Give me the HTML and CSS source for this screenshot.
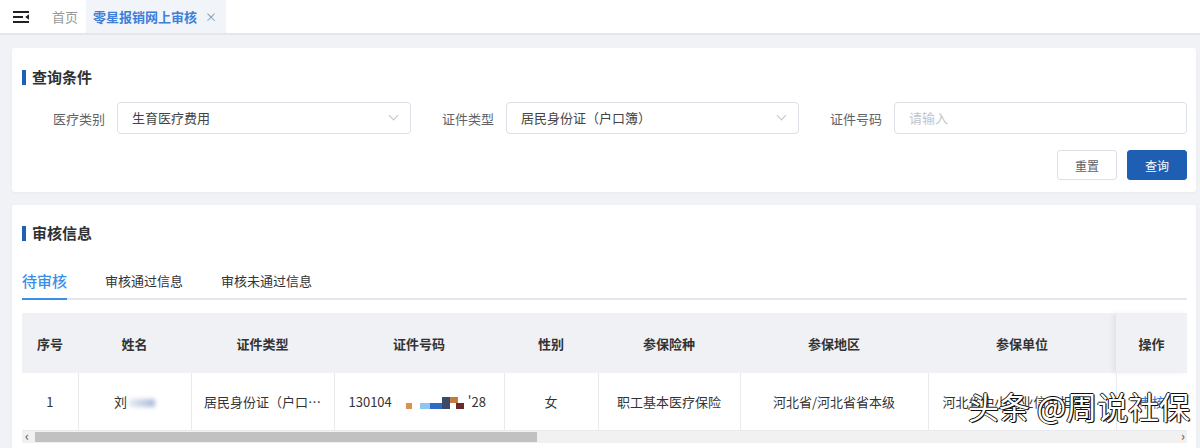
FILE: index.html
```html
<!DOCTYPE html>
<html lang="zh-CN">
<head>
    <meta charset="UTF-8">
    <title>零星报销网上审核</title>
    <link rel="stylesheet" href="styles.css">
</head>
<body>

<!-- 顶部标签栏 -->
<div class="topbar">
    <div class="fold-icon">
        <svg width="16" height="12" viewBox="0 0 16 12">
            <rect x="0" y="0" width="16" height="2" fill="#222"/>
            <rect x="0" y="5" width="10" height="2" fill="#222"/>
            <path d="M16 3.2 L12.2 6 L16 8.8 Z" fill="#222"/>
            <rect x="0" y="10" width="16" height="2" fill="#222"/>
        </svg>
    </div>
    <div class="nav-tab">首页</div>
    <div class="nav-tab active">零星报销网上审核<span class="close">×</span></div>
</div>

<div class="main">
    <!-- 查询条件 -->
    <div class="card query-card">
        <div class="card-title">查询条件</div>
        <div class="form-row">
            <div class="form-item">
                <label>医疗类别</label>
                <div class="control select">生育医疗费用<span class="arrow"></span></div>
            </div>
            <div class="form-item">
                <label>证件类型</label>
                <div class="control select">居民身份证（户口簿）<span class="arrow"></span></div>
            </div>
            <div class="form-item">
                <label>证件号码</label>
                <div class="control placeholder">请输入</div>
            </div>
        </div>
        <div class="form-actions">
            <button class="btn">重置</button>
            <button class="btn primary">查询</button>
        </div>
    </div>

    <!-- 审核信息 -->
    <div class="card audit-card">
        <div class="card-title">审核信息</div>
        <div class="tabs">
            <div class="tab active">待审核</div>
            <div class="tab">审核通过信息</div>
            <div class="tab">审核未通过信息</div>
        </div>

        <div class="table-wrap">
            <table class="data-table">
                <colgroup>
                    <col style="width:56px"><col style="width:113px"><col style="width:143px">
                    <col style="width:170px"><col style="width:94px"><col style="width:142px">
                    <col style="width:188px"><col style="width:188px"><col style="width:71px">
                </colgroup>
                <thead>
                    <tr>
                        <th>序号</th><th>姓名</th><th>证件类型</th><th>证件号码</th><th>性别</th>
                        <th>参保险种</th><th>参保地区</th><th>参保单位</th><th class="fixed">操作</th>
                    </tr>
                </thead>
                <tbody>
                    <tr>
                        <td>1</td>
                        <td>刘<span class="blur-name"></span></td>
                        <td class="ellipsis">居民身份证（户口…</td>
                        <td class="left">130104<span class="mosaic"><i class="m1"></i><i class="m2"></i><i class="m3"></i><i class="m4"></i><i class="m5"></i><i class="m6"></i></span>'28</td>
                        <td>女</td>
                        <td>职工基本医疗保险</td>
                        <td>河北省/河北省省本级</td>
                        <td class="left">河北省中小企业信用担保</td>
                        <td class="fixed"><a class="link" href="#">审核</a></td>
                    </tr>
                </tbody>
            </table>
            <div class="hscroll">
                <span class="sarrow">‹</span>
                <div class="thumb"></div>
                <span class="sarrow right">›</span>
            </div>
            <div class="watermark">头条 @周说社保</div>
        </div>
    </div>
</div>

</body>
</html>
```

FILE: styles.css
```css
/* 全体 */
body {
    margin: 0;
    font-family: "Noto Sans CJK SC", "Liberation Sans", sans-serif;
    font-size: 13px;
    color: #333;
    background: #f0f2f5;
    overflow: hidden;
}

/* 顶部标签栏 */
.topbar {
    height: 33px;
    background: #fff;
    border-bottom: 2px solid #e4e7ea;
    display: flex;
    align-items: stretch;
}

.fold-icon {
    width: 40px;
    padding-left: 13px;
    display: flex;
    align-items: center;
    box-sizing: border-box;
}

.nav-tab {
    display: flex;
    align-items: center;
    padding: 0 7px 0 12px;
    color: #999;
    font-size: 13px;
}

.nav-tab.active {
    margin-left: 1px;
    background: #f1f4f9;
    color: #3d7fd9;
    font-weight: bold;
    padding: 0 9px 0 7px;
}

.nav-tab .close {
    margin-left: 8px;
    font-weight: normal;
    color: #8c96a8;
    font-size: 12px;
}

/* メイン */
.main {
    padding: 13px 4px 0 12px;
}

.card {
    background: #fff;
    border-radius: 3px;
    padding: 19px 9px 12px 10px;
    box-shadow: 0 1px 3px rgba(0, 0, 0, 0.04);
}

.audit-card {
    margin-top: 13px;
    padding-top: 18px;
    padding-bottom: 0;
    height: 240px;
}

.card-title {
    font-size: 15px;
    font-weight: bold;
    color: #303133;
    line-height: 20px;
    display: flex;
    align-items: center;
}

.card-title::before {
    content: "";
    width: 4px;
    height: 15px;
    background: #1f5fb4;
    margin-right: 6px;
}

/* 查询フォーム */
.form-row {
    margin-top: 15px;
    display: grid;
    grid-template-columns: 389px 388px 388px;
}

.form-item {
    display: flex;
    align-items: center;
}

.form-item label {
    width: 95px;
    padding-right: 12px;
    box-sizing: border-box;
    text-align: right;
    color: #606266;
}

.control {
    flex: 1;
    height: 32px;
    border: 1px solid #dcdfe6;
    border-radius: 4px;
    box-sizing: border-box;
    padding-left: 14px;
    line-height: 30px;
    color: #444;
    position: relative;
}

.control.placeholder {
    color: #c0c4cc;
}

.arrow {
    position: absolute;
    right: 13px;
    top: 9px;
    width: 6px;
    height: 6px;
    border-right: 1px solid #c0c4cc;
    border-bottom: 1px solid #c0c4cc;
    transform: rotate(45deg);
}

.form-actions {
    margin-top: 16px;
    display: flex;
    justify-content: flex-end;
    gap: 10px;
}

.btn {
    width: 60px;
    height: 30px;
    border: 1px solid #dcdfe6;
    border-radius: 3px;
    background: #fff;
    color: #606266;
    font-family: inherit;
    font-size: 12px;
    cursor: pointer;
}

.btn.primary {
    background: #1e5fb4;
    border-color: #1e5fb4;
    color: #fff;
}

/* タブ */
.tabs {
    margin-top: 17px;
    display: flex;
    gap: 38px;
    border-bottom: 2px solid #e4e7ed;
}

.tab {
    padding-top: 4px;
    height: 34px;
    line-height: 34px;
    margin-bottom: -2px;
    border-bottom: 2px solid transparent;
    color: #333;
}

.tab.active {
    font-size: 15px;
    font-weight: 500;
    color: #3b8ee6;
    border-bottom-color: #3b8ee6;
}

/* テーブル */
.table-wrap {
    margin-top: 13px;
    position: relative;
}

.data-table {
    table-layout: fixed;
    border-collapse: collapse;
    width: 1165px;
}

.data-table th {
    height: 60px;
    background: #eff1f5;
    font-weight: bold;
    color: #333;
    text-align: center;
    padding: 0;
}

.data-table td {
    height: 57px;
    text-align: center;
    border-left: 1px solid #e8eaee;
    border-bottom: 1px solid #e8eaee;
    padding: 0 10px;
    color: #333;
    white-space: nowrap;
    overflow: hidden;
}

.data-table td:first-child {
    border-left: none;
}

.data-table td.left {
    text-align: left;
    padding-left: 14px;
}

.data-table td.ellipsis {
    padding-left: 10px;
}

.data-table .fixed {
    box-shadow: -3px 0 5px rgba(0, 0, 0, 0.06);
}

.blur-name {
    display: inline-block;
    width: 26px;
    height: 8px;
    margin-left: 2px;
    vertical-align: middle;
    background: linear-gradient(90deg, #e6ebf3, #aab9d8);
    filter: blur(2px);
}

.mosaic {
    display: inline-block;
    width: 60px;
    height: 16px;
    margin: 0 2px 0 14px;
    vertical-align: middle;
    position: relative;
}

.mosaic i {
    position: absolute;
    display: block;
}

.mosaic .m1 { left: 0; top: 8px; width: 6px; height: 6px; background: #d9934e; }
.mosaic .m2 { left: 14px; top: 8px; width: 10px; height: 6px; background: #8fc5ee; }
.mosaic .m3 { left: 24px; top: 8px; width: 12px; height: 6px; background: #2f6cc4; }
.mosaic .m4 { left: 36px; top: 2px; width: 8px; height: 12px; background: #3a4a6a; }
.mosaic .m5 { left: 44px; top: 2px; width: 8px; height: 6px; background: #c47a3c; }
.mosaic .m6 { left: 50px; top: 8px; width: 8px; height: 6px; background: #6a2a2a; }

.link {
    color: #3a7bd5;
    text-decoration: none;
}

/* 横スクロールバー */
.hscroll {
    height: 12px;
    width: 1165px;
    background: #f1f1f1;
    position: relative;
}

.hscroll .thumb {
    position: absolute;
    left: 13px;
    top: 1px;
    width: 502px;
    height: 10px;
    background: #c1c1c1;
}

.sarrow {
    position: absolute;
    left: 3px;
    top: -3px;
    font-size: 13px;
    line-height: 16px;
    color: #505050;
}

.sarrow.right {
    left: auto;
    right: 2px;
}

/* 透かし */
.watermark {
    position: absolute;
    right: -3px;
    top: 73px;
    font-size: 31px;
    line-height: 40px;
    color: #fff;
    text-shadow: 1px 1px 0 #111, -1px 0 0 #111, 0 -1px 0 #111, 1px 0 1px #111;
    white-space: nowrap;
}
```
